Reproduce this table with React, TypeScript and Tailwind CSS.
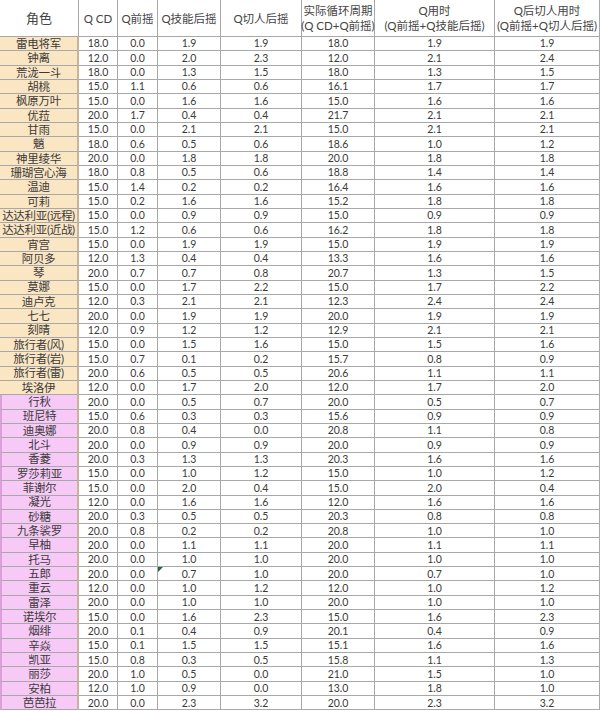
import React from "react";

type Row = [string, string, string, string, string, string, string, string];

const yellowRows: Row[] = [
  ["雷电将军", "18.0", "0.0", "1.9", "1.9", "18.0", "1.9", "1.9"],
  ["钟离", "12.0", "0.0", "2.0", "2.3", "12.0", "2.1", "2.4"],
  ["荒泷一斗", "18.0", "0.0", "1.3", "1.5", "18.0", "1.3", "1.5"],
  ["胡桃", "15.0", "1.1", "0.6", "0.6", "16.1", "1.7", "1.7"],
  ["枫原万叶", "15.0", "0.0", "1.6", "1.6", "15.0", "1.6", "1.6"],
  ["优菈", "20.0", "1.7", "0.4", "0.4", "21.7", "2.1", "2.1"],
  ["甘雨", "15.0", "0.0", "2.1", "2.1", "15.0", "2.1", "2.1"],
  ["魈", "18.0", "0.6", "0.5", "0.6", "18.6", "1.0", "1.2"],
  ["神里绫华", "20.0", "0.0", "1.8", "1.8", "20.0", "1.8", "1.8"],
  ["珊瑚宫心海", "18.0", "0.8", "0.5", "0.6", "18.8", "1.4", "1.4"],
  ["温迪", "15.0", "1.4", "0.2", "0.2", "16.4", "1.6", "1.6"],
  ["可莉", "15.0", "0.2", "1.6", "1.6", "15.2", "1.8", "1.8"],
  ["达达利亚(远程)", "15.0", "0.0", "0.9", "0.9", "15.0", "0.9", "0.9"],
  ["达达利亚(近战)", "15.0", "1.2", "0.6", "0.6", "16.2", "1.8", "1.8"],
  ["宵宫", "15.0", "0.0", "1.9", "1.9", "15.0", "1.9", "1.9"],
  ["阿贝多", "12.0", "1.3", "0.4", "0.4", "13.3", "1.6", "1.6"],
  ["琴", "20.0", "0.7", "0.7", "0.8", "20.7", "1.3", "1.5"],
  ["莫娜", "15.0", "0.0", "1.7", "2.2", "15.0", "1.7", "2.2"],
  ["迪卢克", "12.0", "0.3", "2.1", "2.1", "12.3", "2.4", "2.4"],
  ["七七", "20.0", "0.0", "1.9", "1.9", "20.0", "1.9", "1.9"],
  ["刻晴", "12.0", "0.9", "1.2", "1.2", "12.9", "2.1", "2.1"],
  ["旅行者(风)", "15.0", "0.0", "1.5", "1.6", "15.0", "1.5", "1.6"],
  ["旅行者(岩)", "15.0", "0.7", "0.1", "0.2", "15.7", "0.8", "0.9"],
  ["旅行者(雷)", "20.0", "0.6", "0.5", "0.5", "20.6", "1.1", "1.1"],
  ["埃洛伊", "12.0", "0.0", "1.7", "2.0", "12.0", "1.7", "2.0"],
];

const pinkRows: Row[] = [
  ["行秋", "20.0", "0.0", "0.5", "0.7", "20.0", "0.5", "0.7"],
  ["班尼特", "15.0", "0.6", "0.3", "0.3", "15.6", "0.9", "0.9"],
  ["迪奥娜", "20.0", "0.8", "0.4", "0.0", "20.8", "1.1", "0.8"],
  ["北斗", "20.0", "0.0", "0.9", "0.9", "20.0", "0.9", "0.9"],
  ["香菱", "20.0", "0.3", "1.3", "1.3", "20.3", "1.6", "1.6"],
  ["罗莎莉亚", "15.0", "0.0", "1.0", "1.2", "15.0", "1.0", "1.2"],
  ["菲谢尔", "15.0", "0.0", "2.0", "0.4", "15.0", "2.0", "0.4"],
  ["凝光", "12.0", "0.0", "1.6", "1.6", "12.0", "1.6", "1.6"],
  ["砂糖", "20.0", "0.3", "0.5", "0.5", "20.3", "0.8", "0.8"],
  ["九条裟罗", "20.0", "0.8", "0.2", "0.2", "20.8", "1.0", "1.0"],
  ["早柚", "20.0", "0.0", "1.1", "1.1", "20.0", "1.1", "1.1"],
  ["托马", "20.0", "0.0", "1.0", "1.0", "20.0", "1.0", "1.0"],
  ["五郎", "20.0", "0.0", "0.7", "1.0", "20.0", "0.7", "1.0"],
  ["重云", "12.0", "0.0", "1.0", "1.2", "12.0", "1.0", "1.2"],
  ["雷泽", "20.0", "0.0", "1.0", "1.0", "20.0", "1.0", "1.0"],
  ["诺埃尔", "15.0", "0.0", "1.6", "2.3", "15.0", "1.6", "2.3"],
  ["烟绯", "20.0", "0.1", "0.4", "0.9", "20.1", "0.4", "0.9"],
  ["辛焱", "15.0", "0.1", "1.5", "1.5", "15.1", "1.6", "1.6"],
  ["凯亚", "15.0", "0.8", "0.3", "0.5", "15.8", "1.1", "1.3"],
  ["丽莎", "20.0", "1.0", "0.5", "0.0", "21.0", "1.5", "1.0"],
  ["安柏", "12.0", "1.0", "0.9", "0.0", "13.0", "1.8", "1.0"],
  ["芭芭拉", "20.0", "0.0", "2.3", "3.2", "20.0", "2.3", "3.2"],
];

const cell =
  "h-[14.34px] border-r border-b border-[#a8a8a8] flex items-center justify-center text-[10.5px] leading-none text-[#3a3a3a]";
const hcell =
  "h-[37px] border-r border-b border-[#a8a8a8] flex flex-col items-center justify-center text-[11.5px] leading-[15px] text-[#444] text-center whitespace-nowrap";

function DataRow({ r, pink }: { r: Row; pink: boolean }) {
  return (
    <>
      <div
        className={`${cell} text-[11.5px] whitespace-nowrap tracking-[-0.3px] ${
          pink
            ? "bg-[#f6c9f6] border-l-2 border-l-[#d9a0d9]"
            : "bg-[#fbe6c4]"
        } border-r-2 border-r-[#c9b49a]`}
      >
        {r[0]}
      </div>
      {r.slice(1).map((v, i) => (
        <div key={i} className={`${cell} relative`}>
          {r[0] === "五郎" && i === 2 && (
            <svg
              className="absolute left-0 top-0"
              width="5"
              height="5"
              viewBox="0 0 5 5"
            >
              <polygon points="0,0 5,0 0,5" fill="#1f6b35" />
            </svg>
          )}
          {v}
        </div>
      ))}
    </>
  );
}

export default function App() {
  return (
    <div
      className="w-[600px] h-[711px] overflow-hidden bg-white"
      style={{ fontFamily: "Lato, 'Noto Sans CJK SC', sans-serif" }}
    >
      <div className="grid grid-cols-[79px_39px_40px_63px_81px_73px_120px_105px]">
        <div className={`${hcell} text-[13px]`}>角色</div>
        <div className={hcell}>Q CD</div>
        <div className={hcell}>Q前摇</div>
        <div className={hcell}>Q技能后摇</div>
        <div className={hcell}>Q切人后摇</div>
        <div className={hcell}>
          <span>实际循环周期</span>
          <span>(Q CD+Q前摇)</span>
        </div>
        <div className={hcell}>
          <span>Q用时</span>
          <span>(Q前摇+Q技能后摇)</span>
        </div>
        <div className={hcell}>
          <span>Q后切人用时</span>
          <span>(Q前摇+Q切人后摇)</span>
        </div>
        {yellowRows.map((r) => (
          <DataRow key={r[0]} r={r} pink={false} />
        ))}
        {pinkRows.map((r) => (
          <DataRow key={r[0]} r={r} pink={true} />
        ))}
      </div>
    </div>
  );
}
